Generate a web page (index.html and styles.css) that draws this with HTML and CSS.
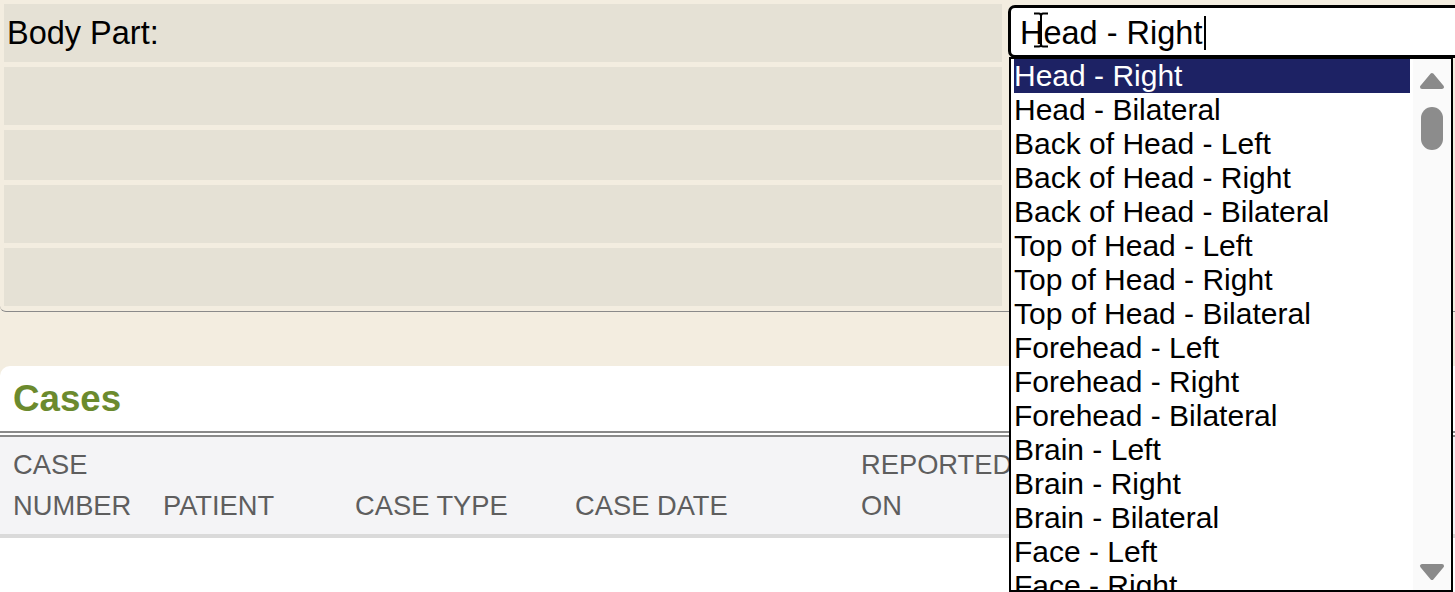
FILE: index.html
```html
<!DOCTYPE html>
<html>
<head>
<meta charset="utf-8">
<title>Body Part</title>
<link rel="stylesheet" href="styles.css">
</head>
<body>
<div class="page">
  <section class="form">
    <div class="row">
      <div class="label">Body Part:</div>
      <div class="field">
        <div class="combo">
          <span class="val">Head - Right</span><span class="caret"></span>
          <svg class="ibeam" width="20" height="36" viewBox="0 0 20 36">
            <path d="M3 1.5 H8 M12 1.5 H17 M8 1.5 Q10 1.5 10 4 V32 Q10 34.5 8 34.5 M12 1.5 Q10 1.5 10 4 M10 32 Q10 34.5 12 34.5 M3 34.5 H8 M12 34.5 H17" fill="none" stroke="#000" stroke-width="2"/>
          </svg>
        </div>
      </div>
    </div>
    <div class="row"><div class="label"></div><div class="field"></div></div>
    <div class="row short"><div class="label"></div><div class="field"></div></div>
    <div class="row"><div class="label"></div><div class="field"></div></div>
    <div class="row"><div class="label"></div><div class="field"></div></div>
  </section>

  <section class="cases">
    <h2 class="cases-title">Cases</h2>
    <div class="thead">
      <div class="th">CASE NUMBER</div>
      <div class="th">PATIENT</div>
      <div class="th">CASE TYPE</div>
      <div class="th">CASE DATE</div>
      <div class="th">REPORTED ON</div>
      <div class="th"></div>
    </div>
  </section>

  <div class="listbox">
    <ul class="options">
      <li class="opt selected">Head - Right</li>
      <li class="opt">Head - Bilateral</li>
      <li class="opt">Back of Head - Left</li>
      <li class="opt">Back of Head - Right</li>
      <li class="opt">Back of Head - Bilateral</li>
      <li class="opt">Top of Head - Left</li>
      <li class="opt">Top of Head - Right</li>
      <li class="opt">Top of Head - Bilateral</li>
      <li class="opt">Forehead - Left</li>
      <li class="opt">Forehead - Right</li>
      <li class="opt">Forehead - Bilateral</li>
      <li class="opt">Brain - Left</li>
      <li class="opt">Brain - Right</li>
      <li class="opt">Brain - Bilateral</li>
      <li class="opt">Face - Left</li>
      <li class="opt">Face - Right</li>
    </ul>
    <div class="scrollbar">
      <svg class="arrow up" width="26" height="18" viewBox="0 0 26 18">
        <path d="M13 3 L23 15 L3 15 Z" fill="#8a8a8a" stroke="#8a8a8a" stroke-width="4" stroke-linejoin="round"/>
      </svg>
      <div class="thumb"></div>
      <div class="track"></div>
      <svg class="arrow down" width="26" height="18" viewBox="0 0 26 18">
        <path d="M3 3 L23 3 L13 15 Z" fill="#8a8a8a" stroke="#8a8a8a" stroke-width="4" stroke-linejoin="round"/>
      </svg>
    </div>
  </div>
</div>
</body>
</html>
```

FILE: styles.css
```css
html, body {
  margin: 0;
  padding: 0;
  overflow: hidden;
}

body {
  background: #f3ede0;
  font-family: "Liberation Sans", Arial, sans-serif;
  color: #000;
  width: 1455px;
  height: 592px;
}

.page {
  position: relative;
  height: 592px;
}

.form {
  display: flex;
  flex-direction: column;
  gap: 5px;
  padding: 4px 0 5px 4px;
  border-bottom: 1px solid #8a8a8a;
  border-bottom-left-radius: 6px;
}

.row {
  display: grid;
  grid-template-columns: 998px 1fr;
  column-gap: 6px;
  height: 58px;
}

.row.short {
  height: 50px;
}

.label {
  background: #e5e1d5;
  font-size: 32.5px;
  padding-left: 3px;
  padding-top: 1px;
  display: flex;
  align-items: center;
}

.field {
  min-width: 0;
}

.combo {
  position: relative;
  margin-top: 1px;
  width: 500px;
  height: 53px;
  box-sizing: border-box;
  border: 3px solid #000;
  border-radius: 7px;
  background: #fff;
  padding-left: 9px;
  padding-top: 3px;
  display: flex;
  align-items: center;
  font-size: 32.5px;
}

.caret {
  display: inline-block;
  width: 2px;
  height: 34px;
  background: #000;
  margin-left: 2px;
}

.ibeam {
  position: absolute;
  left: 20px;
  top: 4px;
}

.cases {
  margin-top: 54px;
  background: #fff;
  border-top-left-radius: 10px;
  height: 226px;
}

.cases-title {
  margin: 0;
  height: 65px;
  line-height: 65px;
  padding-left: 13px;
  font-size: 36.7px;
  font-weight: bold;
  color: #6b8a2d;
  border-bottom: 6px double #8a8a8a;
}

.thead {
  display: grid;
  grid-template-columns: 150px 192px 220px 286px 180px 1fr;
  align-items: end;
  background: #f4f4f6;
  padding: 7px 0 8px;
  border-bottom: 4px solid #dadada;
}

.th {
  padding-left: 13px;
  font-size: 27.3px;
  line-height: 41px;
  color: #5e5e5e;
}

.listbox {
  position: absolute;
  left: 1009px;
  top: 57px;
  width: 444px;
  height: 535px;
  box-sizing: border-box;
  border: 2px solid #000;
  background: #fff;
  display: flex;
  overflow: hidden;
}

.options {
  list-style: none;
  margin: 0;
  padding: 0 3px;
  flex: 1;
  min-width: 0;
}

.opt {
  font-size: 30px;
  line-height: 34px;
  height: 34px;
  white-space: nowrap;
}

.opt.selected {
  background: #1d2264;
  color: #fff;
}

.scrollbar {
  width: 38px;
  background: #fafafa;
  display: flex;
  flex-direction: column;
  align-items: center;
}

.arrow.up {
  margin-top: 13px;
}

.thumb {
  margin-top: 17px;
  width: 22px;
  height: 43px;
  border-radius: 11px;
  background: #8c8c8c;
}

.track {
  flex: 1;
}

.arrow.down {
  margin-bottom: 9px;
}
```
